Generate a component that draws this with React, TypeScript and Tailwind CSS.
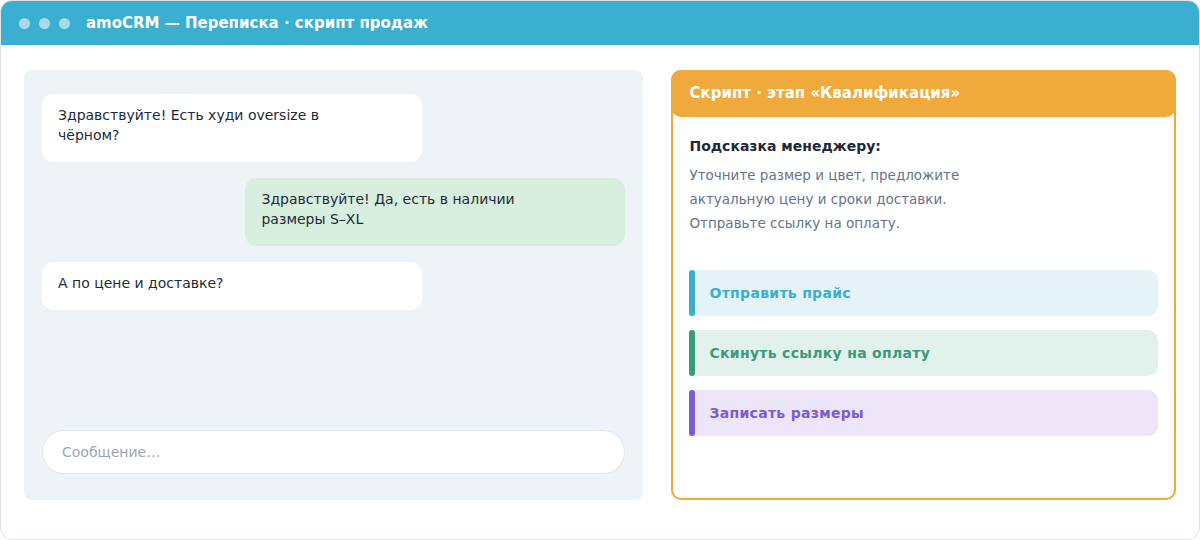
export default function App() {
  return (
    <div className="w-[1200px] h-[540px] bg-white font-['DejaVu_Sans',sans-serif]">
      <div className="w-full h-full rounded-[12px] border border-[#dfe3e8] overflow-hidden flex flex-col">
        {/* title bar */}
        <div className="h-[44px] shrink-0 bg-[#3aafcf] flex items-center pl-[18px]">
          <div className="flex gap-[9px]">
            <span className="w-[11px] h-[11px] rounded-full bg-white/55" />
            <span className="w-[11px] h-[11px] rounded-full bg-white/55" />
            <span className="w-[11px] h-[11px] rounded-full bg-white/55" />
          </div>
          <span className="ml-[16px] text-[15px] font-bold text-white">amoCRM — Переписка · скрипт продаж</span>
        </div>

        <div className="flex gap-[28px] px-[23px] pt-[25px]">
          {/* chat */}
          <div className="w-[620px] h-[430px] bg-[#eef3f7] rounded-[8px] px-[18px] pt-[24px] pb-[26px] flex flex-col">
            <div className="flex flex-col gap-[16px]">
              <Bubble>Здравствуйте! Есть худи oversize в чёрном?</Bubble>
              <Bubble mine>Здравствуйте! Да, есть в наличии размеры S–XL</Bubble>
              <Bubble>А по цене и доставке?</Bubble>
            </div>
            <div className="mt-auto h-[44px] rounded-full bg-white border border-[#e1e7ee] flex items-center px-[19px] text-[14px] text-[#9aa6b4]">
              Сообщение…
            </div>
          </div>

          {/* script */}
          <div className="w-[505px] h-[430px] rounded-[10px] border-2 border-[#f0a93b] flex flex-col">
            <div className="-mx-[2px] -mt-[2px] h-[47px] rounded-[10px] bg-[#f0aa3c] flex items-center px-[18px] text-[15px] font-bold text-white">
              Скрипт · этап «Квалификация»
            </div>
            <div className="px-[16px] pt-[19px]">
              <p className="text-[14px] leading-[20px] font-bold text-[#1f2937]">Подсказка менеджеру:</p>
              <p className="mt-[7px] max-w-[290px] text-[13.5px] leading-[24px] text-[#64748b]">
                Уточните размер и цвет, предложите актуальную цену и сроки доставки. Отправьте ссылку на оплату.
              </p>
              <div className="mt-[35px] flex flex-col gap-[14px]">
                <Action bar="bg-[#3aafcf]" bg="bg-[#e3f3f8]" text="text-[#3aafcf]">Отправить прайс</Action>
                <Action bar="bg-[#3a9b7a]" bg="bg-[#e2f1eb]" text="text-[#3a9b7a]">Скинуть ссылку на оплату</Action>
                <Action bar="bg-[#7b5bd3]" bg="bg-[#ece6f8]" text="text-[#7b5bd3]">Записать размеры</Action>
              </div>
            </div>
          </div>
        </div>
      </div>
    </div>
  )
}

function Bubble({ children, mine }: { children: React.ReactNode; mine?: boolean }) {
  return (
    <div
      className={
        "w-[380px] rounded-[12px] px-[16px] pt-[11px] pb-[17px] text-[14px] leading-[20px] text-[#1f2937] " +
        (mine ? "self-end bg-[#d8efdf]" : "self-start bg-white")
      }
    >
      <p className="max-w-[290px]">{children}</p>
    </div>
  )
}

function Action({
  children,
  bar,
  bg,
  text,
}: {
  children: React.ReactNode
  bar: string
  bg: string
  text: string
}) {
  return (
    <div className={"h-[46px] flex rounded-r-[10px] rounded-l-[3px] " + bg}>
      <span className={"w-[6px] rounded-[3px] " + bar} />
      <span className={"flex items-center pl-[14px] text-[14px] tracking-[0.3px] font-bold " + text}>{children}</span>
    </div>
  )
}
